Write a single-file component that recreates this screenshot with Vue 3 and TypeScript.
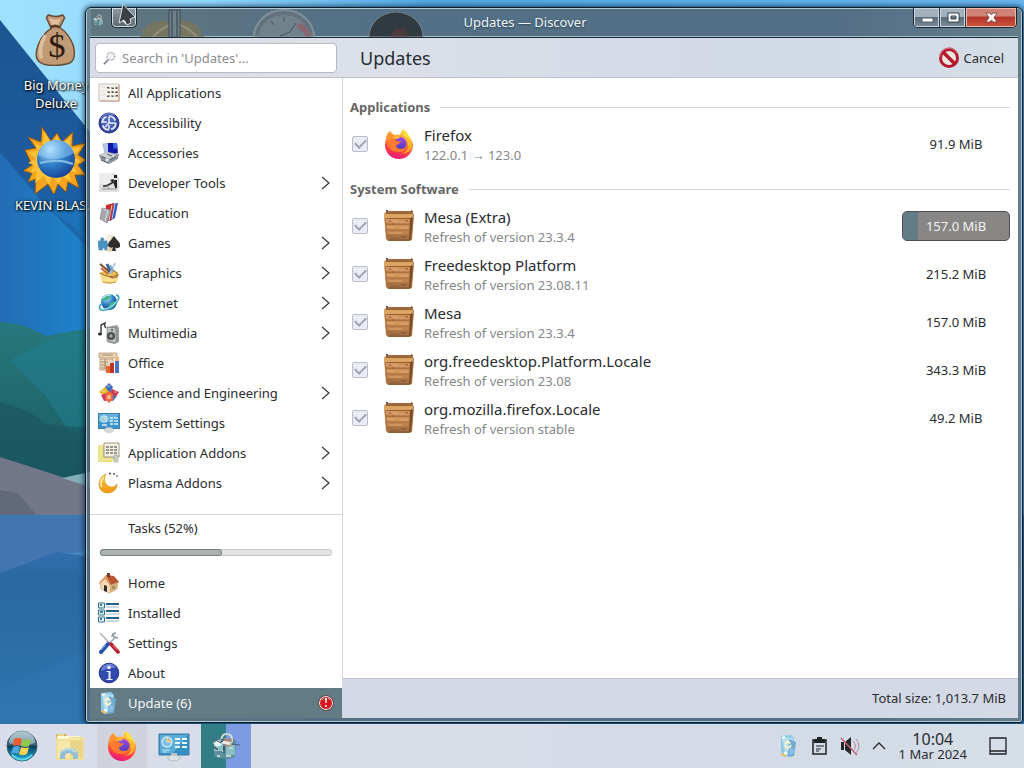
<script setup lang="ts">
import { ref } from 'vue'

interface NavItem { label: string; icon: string; more?: boolean }
interface UpdateItem { name: string; detail: string; size: string; icon: string; progress?: number }
interface Section { title: string; items: UpdateItem[] }

const query = ref('')
const progress = ref(52)

const categories: NavItem[] = [
  { label: 'All Applications', icon: 'all' },
  { label: 'Accessibility', icon: 'access' },
  { label: 'Accessories', icon: 'accessories' },
  { label: 'Developer Tools', icon: 'dev', more: true },
  { label: 'Education', icon: 'books' },
  { label: 'Games', icon: 'games', more: true },
  { label: 'Graphics', icon: 'graphics', more: true },
  { label: 'Internet', icon: 'globe', more: true },
  { label: 'Multimedia', icon: 'media', more: true },
  { label: 'Office', icon: 'office' },
  { label: 'Science and Engineering', icon: 'science', more: true },
  { label: 'System Settings', icon: 'panel' },
  { label: 'Application Addons', icon: 'addons', more: true },
  { label: 'Plasma Addons', icon: 'plasma', more: true },
]

const pages: NavItem[] = [
  { label: 'Home', icon: 'home' },
  { label: 'Installed', icon: 'list' },
  { label: 'Settings', icon: 'tools' },
  { label: 'About', icon: 'info' },
  { label: 'Update (6)', icon: 'update' },
]

const sections: Section[] = [
  { title: 'Applications', items: [
    { name: 'Firefox', detail: '122.0.1 → 123.0', size: '91.9 MiB', icon: 'firefox' },
  ] },
  { title: 'System Software', items: [
    { name: 'Mesa (Extra)', detail: 'Refresh of version 23.3.4', size: '157.0 MiB', icon: 'crate', progress: 14 },
    { name: 'Freedesktop Platform', detail: 'Refresh of version 23.08.11', size: '215.2 MiB', icon: 'crate' },
    { name: 'Mesa', detail: 'Refresh of version 23.3.4', size: '157.0 MiB', icon: 'crate' },
    { name: 'org.freedesktop.Platform.Locale', detail: 'Refresh of version 23.08', size: '343.3 MiB', icon: 'crate' },
    { name: 'org.mozilla.firefox.Locale', detail: 'Refresh of version stable', size: '49.2 MiB', icon: 'crate' },
  ] },
]

/* 22 x 22 glyphs */
const glyphs: Record<string, string> = {
  all: '<rect x="1" y="2" width="20" height="17" fill="#f6f3ef" stroke="#cbc1b8"/><path d="M21 3v16H2" fill="none" stroke="#c49a86"/><path d="M3 5h5M3 9h4M3 13h5M3 17h4" stroke="#e2deda"/><path d="M9 5h3v2H9zM13 5h3v2h-3zM17 5h3v2h-3zM9 9h3v2H9zM13 9h3v2h-3zM17 9h3v2h-3zM9 13h3v2H9zM13 13h3v2h-3zM17 13h3v2h-3z" fill="#b0aaa4"/><path d="M9 5h2v1H9zM14 6h2v1h-2zM18 5h1v2h-1zM10 10h2v1h-2zM14 9h1v2h-1zM17 10h2v1h-2zM9 14h2v1H9zM14 14h1v1h-1zM18 13h2v1h-2z" fill="#55504c"/>',
  access: '<circle cx="11" cy="11" r="10" fill="#3346a0" stroke="#24327c"/><circle cx="11" cy="11" r="6.800" fill="#4c63b8" stroke="#e3e9fb" stroke-width="1.800" stroke-dasharray="8.500 2"/><path d="M11 5v6h6M11 11l-4 4M5 10h4M11 13v4" stroke="#eaf0ff" stroke-width="1.500" fill="none"/><path d="M3 7a9 9 0 0 1 13-4" stroke="#8b9ce2" fill="none"/>',
  accessories: '<path d="M5 2l6-1 1 10-5 1z" fill="#b8c8e4" stroke="#8a9ab8" stroke-width=".6"/><path d="M10 1l9 0 1 10-8 2-2-3z" fill="#1118a8"/><path d="M15 1l4 0 .6 5-4 1z" fill="#4268ea"/><path d="M1 13l8-3 12 2-1 5-9 5-8-4z" fill="#8e959c"/><path d="M2 13l7-3 10 3-8 4z" fill="#ccd1d5"/><path d="M4 15l3 1M9 12l5 2M3 18l7 3M12 18l6-3" stroke="#596068"/><circle cx="9" cy="18" r="1.500" fill="#eef"/>',
  dev: '<path d="M1 1h16l4 4v15H1z" fill="#dedfde"/><path d="M1 1h12l4 6-7 5H1z" fill="#ecedec"/><path d="M5 14c5 1 7-3 11-4l2 5" fill="none" stroke="#333" stroke-width="1.600"/><path d="M16 3h3v3h-3zM12 8l4-1-1 4zM16 8h3v8h-2z" fill="#222"/><path d="M4 17h15M9 13l2 4" stroke="#8d908d"/>',
  books: '<path d="M14 2l6-1-3 15-5 3z" fill="#3c58b8"/><path d="M17 2l-3 15" stroke="#b4c8f2" fill="none"/><path d="M8 3l8-2-3 17-6 2z" fill="#c92f27"/><path d="M14 3l-3 15" stroke="#f7c5bd" fill="none"/><path d="M4 6l9 2-4 13-7-4z" fill="#a5a9ae" stroke="#71757b" stroke-width=".6"/><path d="M5 7l5 2-3 10" stroke="#dadee0" fill="none"/>',
  games: '<path d="M6 17q5 5 11 1l1-9-4-6-6 2z" fill="#dfc7a2"/><path d="M8 4q3-3 6-1l-4 16-5-3z" fill="#f5eee2"/><path d="M0 9h3q-1-4 2-3 2 1 0 3h4v3q3-1 3 1 0 3-3 1v4H7q0-3-2-2t0 2H1z" fill="#4a94c5" stroke="#3b7fa8" stroke-width=".6"/><path d="M16 4q2 3 5 6 3 5-1 6-2 1-3-1l1 4h-4l1-4q-3 2-5-2 0-3 3-5z" fill="#302e2b"/>',
  graphics: '<path d="M2 11q7-5 18-1l-1 10q-8 3-15 0z" fill="#e9bc57"/><path d="M2 2l11 9" stroke="#81432a" stroke-width="2"/><path d="M9 2l4 9" stroke="#3e638f" stroke-width="3"/><path d="M17 1l-5 11" stroke="#b2c9da" stroke-width="2"/><path d="M3 6l7 6" stroke="#c4683b" stroke-width="2"/><path d="M12 3l3 7" stroke="#7ba6ce" stroke-width="2"/><path d="M1 10q10 7 20 2l-2 8q-8 3-15 0z" fill="#fadf91"/><path d="M15 8q6 3 4 7-6 2-8-1M2 11q9 6 18 2" stroke="#94632c" fill="none"/><path d="M5 20q7 2 13 0" stroke="#c9973f" fill="none"/>',
  globe: '<circle cx="11" cy="10" r="8" fill="url(#blueOrb)"/><path d="M6 5q5-3 7-1l-3 4-3 1-3-1zM12 11l6-2-2 6-4 2-1-3z" fill="#45b58a"/><path d="M18 3q5 1 1 7-7 9-16 8-3-2 0-6" fill="none" stroke="#3fa9c4" stroke-width="1.800"/><path d="M3 17q9 1 17-9" fill="none" stroke="#b5e8ee"/><path d="M5 6q3-4 8-3" stroke="#d9f5ff" fill="none"/>',
  media: '<path d="M3 12V3l4-2q-1 3 1 5" stroke="#3b3e40" stroke-width="1.400" fill="none"/><ellipse cx="2" cy="12" rx="2" ry="1.500" fill="#292a2b"/><path d="M9 5l10-2 2 3v14l-5 2-7-2z" fill="#999c9d"/><path d="M9 5l9 1v15l-9-2z" fill="#c4c6c6" stroke="#77797a" stroke-width=".7"/><circle cx="13" cy="14" r="4" fill="#4b4d4f"/><circle cx="13" cy="14" r="1.700" fill="#a8abad"/><circle cx="14" cy="8" r="1.300" fill="#717375"/>',
  office: '<path d="M1 1h18v5H1z" fill="#e9d3b2" stroke="#ac8b68" stroke-width=".7"/><path d="M2 7h13v11H2z" fill="#ead8bb" stroke="#bc9f79"/><path d="M4 3h11M3 10h7M3 13h6M3 16h6M7 7v10" stroke="#a18a75"/><path d="M8 14h4v7H8z" fill="#e3682a"/><path d="M12 11h4v10h-4z" fill="#bf332a"/><path d="M17 9h4v12h-4z" fill="#4b73bd"/><path d="M17 5h4v4h-4z" fill="#f3b47a"/>',
  science: '<path d="M11 1l4 4-3 7H8L7 5z" fill="#416fbd"/><path d="M1 10l6-5 4 5-4 5z" fill="#e8b830"/><path d="M14 7l7 3-4 6-5-4z" fill="#c9394a"/><path d="M3 13l6-2 3 7-6 1z" fill="#c73772"/><path d="M12 12l7 2-4 5-4-1z" fill="#5966b4"/><path d="M8 11l3-2 4 3v5l-4 4-4-4z" fill="#ef6b36"/><circle cx="11" cy="15" r="2.200" fill="#fab08a"/><path d="M9 4h3M4 9h3M16 10h3" stroke="#ffffff90"/>',
  panel: '<rect x=".5" y="1.500" width="21" height="15" fill="#3f94cc" stroke="#3880b1"/><path d="M1 2h20l-8 8H1z" fill="#67b0dc"/><circle cx="6" cy="7" r="3.300" fill="#8fc8e4" stroke="#d0effa"/><path d="M6 4v3h3" fill="none" stroke="#e6e3bc"/><path d="M12 6h3m1 0h4M12 9h3m1 0h4M12 12h3m1 0h4M4 13h5" stroke="#d6effb" stroke-width="1.300"/><ellipse cx="11" cy="18" rx="4.500" ry="2.500" fill="#d6dadd" stroke="#b5bdc5" stroke-width=".6"/>',
  addons: '<path d="M0 3h14v17H0z" fill="#e4d66b"/><path d="M0 3h5v17H0z" fill="#eee58f"/><path d="M6 1h15v14H6z" fill="#f3f1e4" stroke="#999786"/><path d="M8 5h3m1 0h3m1 0h3M8 8h3m1 0h3m1 0h3M8 11h3m1 0h3m1 0h3" stroke="#77766a" stroke-width="1.500"/><path d="M3 16h13v3H3z" fill="#ece594"/><path d="M16 13h4v7h-4zM14 16h4" fill="#cfd1c3" stroke="#a5a89c" stroke-width=".6"/>',
  plasma: '<path d="M8 2Q4 9 10 14q6 3 9-2 0 8-9 9Q2 21 1 13 1 5 8 2z" fill="url(#orange)" stroke="#d78a13" stroke-width=".6"/><path d="M6 5q-5 5-2 10" stroke="#fff2a0" stroke-width="1.700" fill="none"/><circle cx="12" cy="1.500" r="1" fill="#454340"/><circle cx="16" cy="2" r="1" fill="#555"/><circle cx="19" cy="4" r="1" fill="#888"/>',
  home: '<path d="M2 10l6-5 12 5-1 7-8 4-8-4z" fill="#f0d9b4" stroke="#c69c6c" stroke-width=".6"/><path d="M12 12l8-3-1 8-7 4z" fill="#d6ae7c"/><path d="M8 3l8 1 5 6-9 3z" fill="#b85631"/><path d="M1 11l7-8 5 10-2-1-4-5-5 5z" fill="#db9863"/><path d="M6 13l3 1v6l-3-1z" fill="#342d27"/><path d="M9 1h3v4H9z" fill="#7e3829"/><path d="M14 14h3v3h-3z" fill="#a98d66"/>',
  list: '<path d="M.5 1h6v5h-6zM.5 8h6v5h-6zM.5 15h6v5h-6z" fill="#d9f0f5" stroke="#33718c"/><path d="M2 3h2M2 10h3M2 17h2" stroke="#25516b" stroke-width="1.500"/><path d="M8 2h13M8 9h13M8 16h13" stroke="#246186" stroke-width="2"/><path d="M8 5h13M8 12h13M8 19h13" stroke="#8cb6c9"/>',
  tools: '<path d="M2 1l13 14" stroke="#a9afb4" stroke-width="1.400"/><path d="M18 5L8 14" stroke="#adb7bf" stroke-width="2"/><path d="M15 1l1 4 4 1M18 1q-4 0-4 4" stroke="#8d979d" stroke-width="1.300" fill="none"/><path d="M10 12l-7 8" stroke="#2651ad" stroke-width="4" stroke-linecap="round"/><path d="M8 13l-5 5" stroke="#78b2e3"/><path d="M13 12l7 8" stroke="#ba1c2e" stroke-width="3.500" stroke-linecap="round"/><path d="M15 13l4 5" stroke="#f4868e"/>',
  info: '<circle cx="11" cy="11" r="9.800" fill="#3148af" stroke="#26378b"/><path d="M3 9a8 8 0 0 1 15-3q-7-1-15 3z" fill="#6c82d8"/><circle cx="11" cy="5.500" r="1.700" fill="#fff"/><path d="M8.500 9h4v8h2v1h-6v-1h2v-7h-2z" fill="#eef2fb"/>',
  update: '<path d="M3 1l10-1 3 3v17l-10 2-3-5z" fill="#8ecae5"/><path d="M4 2l11 1v14l-8 3z" fill="#b9dff0"/><path d="M11 4l7 3-2 14-6 1z" fill="#72abd0"/><path d="M7 9q3-5 5 0m1 1q-3 6-6 0" fill="none" stroke="#fff6c5" stroke-width="1.800"/><path d="M4 3l3-1M6 18l3 1" stroke="#f4ffff" stroke-width="2"/><path d="M12 13l4 1-1 5-4 1z" fill="#85c1ea"/><path d="M3 18l6 2-1 2-5-2z" fill="#e3c065"/>',
}

/* 32 x 32 pictures */
const pictures: Record<string, string> = {
  firefox: '<path d="M20 1q3 3 4 6 6 5 6 10A14 14 0 0 1 2 17Q2 10 6 6l1-3 4 4q3-1 6 0Q18 3 20 1z" fill="url(#fox)"/><path d="M20 1q-1 5 2 8 4 5 3 9 6-3 2-9-3-3-3-5-3-1-4-3z" fill="#ffdf3f"/><path d="M17 8q9 1 9 9-1 7-8 9 11-1 11-10-2-8-12-8z" fill="#ffb22e"/><circle cx="17" cy="15.500" r="6.500" fill="url(#violet)"/><path d="M3 14q3-4 7-3 2 0 4 2 2 1 4 0-1 3-5 4 0 4 5 4 3 0 5-2-1 5-7 5Q6 24 3 14z" fill="#ff7a2e"/><path d="M3 11q0-5 4-8 0 3 4 4-4 2-5 6z" fill="#ff9531"/><path d="M10 10q4-3 7-1-1 2-4 2z" fill="#ffbd38"/>',
  crate: '<path d="M1 4l3-3h25l2 4-2 25-3 1H5l-2-2z" fill="#ad7240"/><path d="M4 2h24l2 3H2z" fill="#9a6434"/><path d="M1 4h29v4H1z" fill="#dba664"/><path d="M3 8h25l-1 6H3zM3 15h24v5H4z" fill="#cf9259"/><path d="M4 20h23v5H4z" fill="#c0844f"/><path d="M4 25h23v5H5z" fill="#a87248"/><path d="M27 8l3-1-2 22-2 1z" fill="#7d4c22"/><path d="M4 10h11M9 12h16M4 17h8M16 18h9M6 23h14" stroke="#dda56b"/><path d="M3 14h24M4 20h23M4 25h23" stroke="#a46d3e"/><path d="M4 8.500h24" stroke="#955f31"/><path d="M6 11h2M9 14h2M22 11h3M7 28h9M18 27h6" stroke="#885a34"/><path d="M3 0h2L4 3zM28 0l1 3 1-2z" fill="#4d321a"/><path d="M5 30h22" stroke="#76502f"/>',
  folder: '<path d="M2 4h10l2 3h16v4H2z" fill="#dbb366"/><path d="M3 6h23v11H3z" fill="#fff9d4"/><path d="M2 9h12l2-2h14v23H2z" fill="#efdf98"/><path d="M4 11h12v17H4z" fill="#f6e8ab"/><path d="M16 10h13v17H16z" fill="#e9d48a"/><path d="M6 29q-1-11 9-11 10 0 9 11h-5q1-6-4-6t-4 6z" fill="#92bfd6"/><path d="M8 21q7-5 14 1" fill="none" stroke="#bedfe8" stroke-width="2"/><path d="M4 5h6M16 9h10" stroke="#fff5b5"/>',
  monitor: '<path d="M1 4h30v21H1z" fill="#3490c4" stroke="#3a7ca8"/><path d="M2 5h28L15 23H2z" fill="#5cacd8"/><circle cx="9" cy="12" r="5" fill="#7cc0e6" stroke="#d1effa" stroke-width="1.300"/><path d="M9 7v5h5" fill="#e5b57b" stroke="#f3dfb6"/><path d="M17 9h5m2 0h5M17 13h5m2 0h5M17 17h5m2 0h5" stroke="#e4f8ff" stroke-width="2"/><path d="M4 20h8M5 22h4" stroke="#c4e8f6"/><path d="M13 23h6v4h-6z" fill="#bbc3c6"/><ellipse cx="16" cy="28" rx="6" ry="3" fill="#dce1e5" stroke="#a6adb1" stroke-width=".7"/>',
  bag: '<path d="M4 11l4-2 7 2 8-3 3 3-1 16-7 2-10-1-4-2z" fill="#5f8f9c"/><path d="M4 13h9v8H4zM16 15h9v10h-9z" fill="#8bbfc0"/><path d="M11 11q1-8 6-7 6 0 5 8" fill="none" stroke="#d4d9d5" stroke-width="2"/><path d="M3 13l6-3 3 5-5 2z" fill="#e7f5f3"/><path d="M14 8l8 1-1 7-6 1z" fill="#a98883"/><path d="M12 12l10 2" stroke="#eee9dd" stroke-width="3"/><path d="M20 14l10 1M2 8l9 5" stroke="#46637a"/><path d="M6 20h3m3 1h3m4-3h4M7 26h3m6 0h5" stroke="#b9d9da" stroke-width="2"/><path d="M14 16v7M4 17l4 3M12 9v3" stroke="#304c60" stroke-width="1.500"/>',
  start: '<circle cx="16" cy="16" r="15" fill="url(#orb)" stroke="#395b6d"/><path d="M3 13A13 13 0 0 1 29 13Q17 18 3 13z" fill="#e2eff5" opacity=".45"/><path d="M8 9q4-2 8 0l-2 7q-3-2-7 0z" fill="#e95e31"/><path d="M17 9q4 2 8 0l-2 7q-4 2-8 0z" fill="#91c947"/><path d="M7 17q4-2 7 0l-2 7q-3-2-7 0z" fill="#4ca6e3"/><path d="M15 17q4 2 8 0l-2 7q-4 2-8 0z" fill="#fbd550"/><path d="M6 25q10 9 20 0" stroke="#58d6ee" fill="none" stroke-width="2"/>',
}

const tasks = [
  { label: 'Files', icon: 'folder', state: '' },
  { label: 'Firefox', icon: 'firefox', state: 'open' },
  { label: 'Control Panel', icon: 'monitor', state: '' },
  { label: 'Discover', icon: 'bag', state: 'active' },
]
</script>

<template>
  <div class="screen">
    <svg class="defs" aria-hidden="true">
      <defs>
        <linearGradient id="fox" x1=".7" y1="0" x2=".4" y2="1"><stop offset="0" stop-color="#ffe14c" /><stop offset=".45" stop-color="#ff8a2b" /><stop offset=".75" stop-color="#ff3d45" /><stop offset="1" stop-color="#e3168b" /></linearGradient>
        <linearGradient id="violet" x2="0" y2="1"><stop offset="0" stop-color="#a44be5" /><stop offset="1" stop-color="#483cb9" /></linearGradient>
        <radialGradient id="blueOrb" cx=".35" cy=".25" r=".8"><stop offset="0" stop-color="#c5eafa" /><stop offset=".5" stop-color="#3280c8" /><stop offset="1" stop-color="#154094" /></radialGradient>
        <linearGradient id="orange" x2="0" y2="1"><stop offset="0" stop-color="#f9cf36" /><stop offset="1" stop-color="#f29518" /></linearGradient>
        <linearGradient id="orb" x2="0" y2="1"><stop offset="0" stop-color="#8eabb8" /><stop offset=".48" stop-color="#315970" /><stop offset=".5" stop-color="#083c5e" /><stop offset="1" stop-color="#28b9dc" /></linearGradient>
      </defs>
    </svg>

    <main class="desktop">
      <svg class="wallpaper" viewBox="0 0 1024 724" preserveAspectRatio="none" aria-hidden="true">
        <defs>
          <linearGradient id="sky" x2="1" y2="0"><stop offset="0" stop-color="#a0e0ff" /><stop offset=".2" stop-color="#92d9fd" /><stop offset=".42" stop-color="#55a9e6" /><stop offset="1" stop-color="#68b5ef" /></linearGradient>
          <linearGradient id="slope" x2="0" y2="1"><stop offset="0" stop-color="#1c5591" /><stop offset=".45" stop-color="#1d5a9f" /><stop offset="1" stop-color="#1c80c6" /></linearGradient>
          <linearGradient id="blue" x2="1" y2="0"><stop offset="0" stop-color="#236cb4" /><stop offset="1" stop-color="#1d85cb" /></linearGradient>
          <linearGradient id="forest" x2="0" y2="1"><stop offset="0" stop-color="#26787c" /><stop offset="1" stop-color="#1a5a62" /></linearGradient>
          <linearGradient id="water" x2="0" y2="1"><stop offset="0" stop-color="#397ab9" /><stop offset=".3" stop-color="#2a68a3" /><stop offset="1" stop-color="#2d75ae" /></linearGradient>
        </defs>
        <rect width="1024" height="724" fill="url(#sky)" />
        <path d="M0 20L90 132V350H0z" fill="url(#slope)" />
        <path d="M0 152L45 205 90 250V350H0z" fill="url(#blue)" />
        <path d="M55 214l20 14 15 20V205H55z" fill="#1d72b8" />
        <path d="M0 322q22 0 46 14l44-8v160H0z" fill="url(#forest)" />
        <path d="M10 360l35 35 23 35 22 6V328L53 338z" fill="#217f8e" opacity=".55" />
        <path d="M0 402q30 7 45 22l45 4v60H0z" fill="#1a545d" opacity=".6" />
        <path d="M0 457l62 20 28 10v30H0z" fill="#737888" />
        <path d="M0 490l18 3 20 24H0z" fill="#62697a" />
        <path d="M62 478l28-6v15z" fill="#83aeb8" />
        <rect y="515" width="1024" height="209" fill="url(#water)" />
        <path d="M0 517h90v40L57 552 0 573z" fill="#4375b1" />
        <path d="M57 552q20 4 33-5v10z" fill="#438bc2" />
        <path d="M0 690l90-42v76H0z" fill="#3178b7" opacity=".4" />
      </svg>

      <div class="shortcuts">
        <a class="shortcut money" href="#big-money">
          <svg viewBox="0 0 48 54" aria-hidden="true"><path d="M16 1q8 3 15 0l2 3-5 10q10 7 14 19 4 17-7 19-14 3-24 0Q-1 48 6 31q4-10 13-16L14 4z" fill="#c19b76" stroke="#684b32" stroke-width="1.500" /><path d="M17 4q7 4 12 0l-4 10h-4z" fill="#e3bfa0" /><path d="M18 14q5-3 10 0" stroke="#624129" stroke-width="3" fill="none" /><path d="M13 22q-8 13-4 24" stroke="#ddbe9c" stroke-width="4" fill="none" /><text x="25" y="45" text-anchor="middle">$</text></svg>
          <span>Big Money<br>Deluxe</span>
        </a>
        <a class="shortcut blaster" href="#kevin-blaster">
          <svg viewBox="0 0 64 68" aria-hidden="true"><path d="M18 1l9 14L33 7l5 9L49 6l-1 14 14-3-8 12 9 5-9 5 8 10-11 0 4 13-11-6-2 10-8-8-4 11-6-11-13 10 1-15-8 3 4-9-9-2 9-6L1 24l11-2L4 11l13 5z" fill="#f3a51f" stroke="#91590d" /><path d="M20 5l8 13 5-8 4 9 9-8 0 12 11-2-8 10 8 4-9 4 5 7-9-1 3 10-9-5-3 8-7-8-3 9-5-9-9 7 2-12-7 2 5-8-7-2 8-4-7-7 9-1-4-8 9 4z" fill="#ffc33a" /><circle cx="32" cy="33" r="19" fill="url(#blueOrb)" /><path d="M14 29q18 9 36-2-4-14-19-13-13 1-17 15z" fill="#9ed4ff" opacity=".45" /><path d="M16 37q18-5 33 1" stroke="#85c1e6" stroke-width="2" fill="none" /></svg>
          <span>KEVIN BLAS...</span>
        </a>
      </div>

      <section class="window" aria-label="Updates — Discover">
        <header class="titlebar">
          <svg class="behind" width="400" height="28" viewBox="0 0 400 28" aria-hidden="true">
            <path d="M50 28l4-4-3-3 6-1-1-5 6 1 1-5 5 3 4-4 4 3h12l4-3 4 4 5-3 1 5 6-1-1 5 6 1-3 3 4 4z" fill="#7d7758" /><path d="M63 28q22-25 44 0" fill="none" stroke="#9e9574" stroke-width="2" /><rect x="79" y="1" width="11" height="27" fill="#77858b" stroke="#33434b" /><path d="M82 2v26M87 2v26" stroke="#3c4c55" stroke-width="1.500" />
            <path d="M164 28a30 27 0 0 1 60 0z" fill="#66737d" stroke="#8b989f" stroke-width="2" /><path d="M169 28a25 22 0 0 1 50 0" fill="#77868f" /><path d="M194 8v5M181 12l3 4M206 14l-6 9-10 4" stroke="#3e4f5a" fill="none" /><path d="M208 16q9 5 11 12" stroke="#94656b" stroke-width="6" fill="none" />
            <path d="M279 28a27 25 0 0 1 54 0z" fill="#2b2d31" stroke="#7b8588" /><path d="M300 28l5-8 9-1 5 9z" fill="#642f2d" opacity=".6" />
          </svg>
          <svg class="appicon" viewBox="0 0 32 32" aria-hidden="true" v-html="pictures.bag"></svg>
          <button class="pin" aria-label="Window menu"><svg viewBox="0 0 24 18" aria-hidden="true"><path d="M15 3l-6 6 6 6" fill="none" stroke="#fff" stroke-width="2" /></svg></button>
          <h1>Updates — Discover</h1>
          <div class="controls">
            <button aria-label="Minimize"><svg viewBox="0 0 26 18"><rect x="8" y="9" width="11" height="4" fill="#fff" stroke="#556370" /></svg></button>
            <button aria-label="Maximize"><svg viewBox="0 0 26 18"><path d="M8 4h11v9H8zM11 7v3h5V7z" fill="#fff" fill-rule="evenodd" stroke="#35434f" /></svg></button>
            <button class="close" aria-label="Close"><svg viewBox="0 0 50 18"><path d="M20 4h4l1.500 2L27 4h4l-3 4.500L31 13h-4l-1.500-2-1.500 2h-4l3-4.500z" fill="#fff" stroke="#713b3b" stroke-width=".8" /></svg></button>
          </div>
        </header>

        <div class="client">
          <aside class="sidebar">
            <div class="searchbar">
              <label class="search">
                <svg viewBox="0 0 16 16" aria-hidden="true"><circle cx="9" cy="6" r="4.500" fill="#f0f3f5" stroke="#abb0b5" stroke-width="1.500" stroke-dasharray="2 1" /><path d="M6 10l-5 5" stroke="#858789" stroke-width="2" /></svg>
                <input v-model="query" type="search" aria-label="Search" placeholder="Search in 'Updates'...">
              </label>
            </div>
            <nav class="categories" aria-label="Categories">
              <a v-for="item in categories" :key="item.label" class="nav" href="#category">
                <svg class="glyph" viewBox="0 0 22 22" aria-hidden="true" v-html="glyphs[item.icon]"></svg>
                <span>{{ item.label }}</span>
                <svg v-if="item.more" class="arrow" viewBox="0 0 10 16" aria-hidden="true"><path d="M1 2l7 6-7 6" /></svg>
              </a>
            </nav>
            <div class="tasks">
              <span id="task-label">Tasks ({{ progress }}%)</span>
              <div class="track" role="progressbar" aria-labelledby="task-label" :aria-valuenow="progress"><div class="fill" :style="{ width: progress + '%' }"></div></div>
            </div>
            <nav aria-label="Pages">
              <a v-for="(item, i) in pages" :key="item.label" class="nav" :class="{ selected: i === 4 }" href="#page">
                <svg class="glyph" viewBox="0 0 22 22" aria-hidden="true" v-html="glyphs[item.icon]"></svg>
                <span>{{ item.label }}</span>
                <svg v-if="i === 4" class="alert" viewBox="0 0 16 16" aria-hidden="true"><circle cx="8" cy="8" r="6.500" fill="#d51820" stroke="#fff" /><circle cx="8" cy="8" r="7.500" fill="none" stroke="#713838" stroke-width=".8" /><path d="M4 5l2-2M12 5l-2-2" stroke="#f19a9a" /><path d="M7 3h2l-.4 5H7.400z" fill="#fff" /><circle cx="8" cy="11" r="1" fill="#fff" /></svg>
              </a>
            </nav>
          </aside>

          <div class="page">
            <header class="pagehead">
              <h2>Updates</h2>
              <button class="cancel"><svg viewBox="0 0 22 22" aria-hidden="true"><circle cx="11" cy="11" r="8.500" fill="#e9e6df" stroke="#b6182d" stroke-width="3" /><path d="M5 5l12 12" stroke="#b6182d" stroke-width="3.500" /><path d="M2 10a9 9 0 0 1 17-4" fill="none" stroke="#c76a78" stroke-width="1.500" /></svg>Cancel</button>
            </header>
            <div class="content">
              <section v-for="(section, s) in sections" :key="section.title">
                <h3>{{ section.title }}</h3>
                <ul>
                  <li v-for="(item, i) in section.items" :key="item.name">
                    <input :id="`pick-${s}-${i}`" type="checkbox" checked disabled>
                    <svg class="picture" viewBox="0 0 32 32" aria-hidden="true" v-html="pictures[item.icon]"></svg>
                    <label :for="`pick-${s}-${i}`"><strong>{{ item.name }}</strong><small>{{ item.detail }}</small></label>
                    <span class="size" :class="{ busy: item.progress }"><i v-if="item.progress" :style="{ width: item.progress + '%' }"></i><b>{{ item.size }}</b></span>
                  </li>
                </ul>
              </section>
            </div>
            <footer>Total size: 1,013.7 MiB</footer>
          </div>
        </div>
      </section>

      <svg class="cursor" viewBox="0 0 18 24" aria-hidden="true"><path d="M5 1l12 13-5 2 1 4-4 2-3-5-5 3z" fill="#3b4145" stroke="#d5dee1" /></svg>
    </main>

    <footer class="taskbar">
      <button class="start" aria-label="Start"><svg viewBox="0 0 32 32" aria-hidden="true" v-html="pictures.start"></svg></button>
      <button v-for="task in tasks" :key="task.label" class="task" :class="task.state" :aria-label="task.label"><svg viewBox="0 0 32 32" aria-hidden="true" v-html="pictures[task.icon]"></svg></button>
      <div class="tray">
        <button aria-label="Updates"><svg viewBox="0 0 22 22" v-html="glyphs.update"></svg></button>
        <button aria-label="Clipboard"><svg viewBox="0 0 22 22"><path d="M5 5h13v14H5z" fill="none" stroke="#202326" stroke-width="1.500" /><path d="M6 4h3V2h5v2h3v4H6z" fill="#202326" /><path d="M8 11h8M8 14h5M8 16h3" stroke="#202326" /></svg></button>
        <button aria-label="Volume muted"><svg viewBox="0 0 22 22"><path d="M3 7h3v8H3zM7 7l6-5v18l-6-5z" fill="#24282b" /><path d="M15 6q5 5 0 10M18 4q6 7 0 14" stroke="#bd8b9a" fill="none" /><path d="M3 3l16 17" stroke="#c45e76" stroke-width="1.500" /></svg></button>
        <button aria-label="Show hidden icons"><svg viewBox="0 0 22 22"><path d="M5 14l6-6 6 6" fill="none" stroke="#26292c" stroke-width="1.300" /></svg></button>
      </div>
      <time datetime="2024-03-01T10:04"><b>10:04</b><span>1 Mar 2024</span></time>
      <button class="show" aria-label="Show desktop"><svg viewBox="0 0 22 22"><path d="M3 3h16v16H3zM3 16h16" fill="none" stroke="#202326" stroke-width="1.300" /></svg></button>
    </footer>
  </div>
</template>

<style>
body { margin: 0; overflow: hidden; }
</style>

<style scoped>
* { box-sizing: border-box; }
.screen { height: 100vh; display: grid; grid-template-rows: minmax(0, 1fr) 44px; font: 13px/18px "Noto Sans", sans-serif; color: #292c30; }
button { font: inherit; color: inherit; border: 0; padding: 0; background: none; display: flex; align-items: center; justify-content: center; }
a { color: inherit; text-decoration: none; }
svg { display: block; flex: none; }
h1, h2, h3, ul { margin: 0; padding: 0; font-weight: 400; }
.defs { position: absolute; width: 0; height: 0; }
.desktop { position: relative; overflow: hidden; }
.wallpaper { position: absolute; inset: 0; width: 100%; height: 100%; }
.shortcuts { position: absolute; left: 0; top: 14px; width: 112px; display: flex; flex-direction: column; gap: 14px; }
.shortcut { display: flex; flex-direction: column; align-items: center; gap: 10px; text-align: center; color: #fff; text-shadow: 1px 1px 2px #000, 0 0 3px #000; white-space: nowrap; }
.money svg { width: 48px; height: 52px; }
.money text { font: 36px "Liberation Serif", serif; fill: #2c1c10; text-shadow: none; }
.blaster { gap: 2px; }
.blaster svg { width: 64px; height: 68px; }
.window { position: absolute; inset: 7px 1px 1px 85px; display: flex; flex-direction: column; padding: 0 4px 4px; border: 1px solid #0b1d2b; border-radius: 6px 6px 3px 3px; background: linear-gradient(90deg, rgb(88 104 116 / 75%) 5px, #60767f 5px, #537086 30%, #536f86 80%, #637d8b); box-shadow: inset 0 0 0 1px #b1c8d2, 0 0 6px #001b36; }
.titlebar { position: relative; flex: none; height: 30px; display: flex; align-items: flex-start; color: #f0f5f8; border-bottom: 1px solid #152b3b; box-shadow: 0 -1px #a9bdc7 inset; }
.behind { position: absolute; left: 0; top: 1px; opacity: .8; }
.appicon { width: 14px; height: 14px; margin: 5px 5px 0 2px; opacity: .75; position: relative; }
.pin { position: relative; width: 26px; height: 20px; background: linear-gradient(#8e9ba5, #5c6870); border: 1px solid #172936; border-top: 0; border-radius: 0 0 5px 5px; box-shadow: inset 0 0 0 1px #d4dde2; }
.pin svg { width: 24px; height: 18px; }
h1 { position: relative; flex: 1; text-align: center; font-size: 13px; line-height: 28px; text-shadow: 0 1px 2px #263f50; }
.controls { display: flex; height: 20px; margin-right: 1px; border: 1px solid #172936; border-top: 0; border-radius: 0 0 5px 5px; overflow: hidden; }
.controls button { width: 26px; height: 19px; border-right: 1px solid #253949; background: linear-gradient(#a3b1bc 0 45%, #5a6d7c 50%, #7b8b97); box-shadow: inset 0 0 0 1px #cbd6de; }
.controls button svg { width: 26px; height: 18px; }
.controls .close { width: 50px; border: 0; background: linear-gradient(#cf8377 0 42%, #b03425 48%, #cf5640); box-shadow: inset 0 0 0 1px #e9b9af; }
.controls .close svg { width: 50px; }
.client { flex: 1; min-height: 0; display: grid; grid-template-columns: 252px minmax(0, 1fr); background: #fff; }
.sidebar { display: flex; flex-direction: column; min-height: 0; }
.searchbar { flex: none; height: 40px; padding: 5px; background: linear-gradient(90deg, #d8dde8, #dbe0e9); border-bottom: 1px solid #bcc2ca; }
.search { display: flex; align-items: center; gap: 5px; height: 30px; padding: 0 7px; background: #fff; border: 1px solid #b5bbc5; border-radius: 4px; }
.search svg { width: 14px; height: 14px; }
.search input { flex: 1; min-width: 0; border: 0; outline: 0; padding: 0; background: none; font: inherit; }
.search input::placeholder { color: #8b8d90; opacity: 1; }
.categories { flex: 1; min-height: 0; }
.nav { display: flex; align-items: center; gap: 8px; height: 30px; padding: 0 11px 0 8px; }
.nav span { flex: 1; }
.glyph { width: 22px; height: 22px; }
.arrow { width: 10px; height: 16px; fill: none; stroke: #3c3f42; stroke-width: 1.300; }
.alert { width: 16px; height: 16px; margin-right: -3px; }
.selected { background: #637b84; color: #f4f7f8; }
.tasks { flex: none; height: 54px; border-top: 1px solid #d4d7da; padding: 4px 11px 0; }
.tasks span { display: block; padding-left: 27px; }
.track { height: 5px; margin-top: 13px; background: #e4e4e4; border-radius: 3px; box-shadow: 0 0 0 1px #c8caca; }
.fill { height: 100%; background: #a9b4b3; border-radius: 3px; box-shadow: 0 0 0 1px #77807f; }
.page { display: flex; flex-direction: column; min-width: 0; min-height: 0; }
.pagehead { flex: none; height: 40px; display: flex; align-items: center; justify-content: space-between; padding: 0 14px 0 18px; background: linear-gradient(90deg, #dbe0e9, #d2dae6 60%, #d5dde7); border-bottom: 1px solid #bcc2ca; }
h2 { font-size: 18px; line-height: 24px; }
.cancel { gap: 4px; }
.cancel svg { width: 22px; height: 22px; }
.content { flex: 1; min-height: 0; padding: 8px 8px 0 7px; border-left: 1px solid #d4d7da; }
h3 { display: flex; align-items: center; gap: 10px; height: 34px; padding-top: 8px; font-size: 13px; font-weight: 700; color: #666; }
h3::after { content: ""; flex: 1; height: 1px; background: #d6d8da; }
li { display: flex; align-items: center; height: 48px; list-style: none; }
li input { appearance: none; flex: none; width: 16px; height: 16px; margin: 0 15px 0 2px; border: 1px solid #b9bfca; border-radius: 2px; background: #eaedf4; display: grid; place-items: center; }
li input::after { content: ""; width: 9px; height: 5px; margin-bottom: 3px; border: solid #9da2ac; border-width: 0 0 2px 2px; transform: rotate(-45deg); }
.picture { width: 32px; height: 32px; margin-right: 9px; }
label strong, label small { display: block; font-weight: 400; }
li label { flex: 1; min-width: 0; }
label strong { font-size: 15px; line-height: 22px; }
label small { font-size: 13px; line-height: 18px; color: #85878a; }
.size { position: relative; display: flex; align-items: center; justify-content: center; width: 108px; height: 30px; overflow: hidden; }
.size b { position: relative; font-weight: 400; }
.size i { position: absolute; left: 0; top: 0; bottom: 0; background: #627d86; }
.busy { background: #898785; border: 1px solid #4c5052; border-radius: 5px; color: #f2f2f2; }
.page footer { flex: none; height: 40px; border-top: 1px solid #bec4ca; background: #d3dae5; display: flex; align-items: center; justify-content: flex-end; padding: 0 12px 1px 0; }
.cursor { position: absolute; left: 118px; top: 3px; width: 18px; height: 24px; }
.taskbar { display: flex; align-items: stretch; background: linear-gradient(90deg, #d8dde9, #d8dde8 45%, #d3dbe6 80%, #d6dee8); }
.start { width: 44px; margin-right: 1px; }
.start svg, .task svg { width: 32px; height: 32px; }
.task { width: 50px; margin-right: 2px; }
.open { background: #d0d3dd; }
.active { background: linear-gradient(90deg, #317e87 0 50%, #7c9be2 50%); }
.tray { display: flex; margin-left: auto; gap: 8px; align-items: center; }
.tray svg, .show svg { width: 22px; height: 22px; }
time { display: flex; flex-direction: column; align-items: center; justify-content: center; margin: 0 20px 0 9px; }
time b { font-size: 16px; line-height: 16px; font-weight: 400; }
time span { line-height: 14px; }
.show { margin-right: 15px; }
</style>
